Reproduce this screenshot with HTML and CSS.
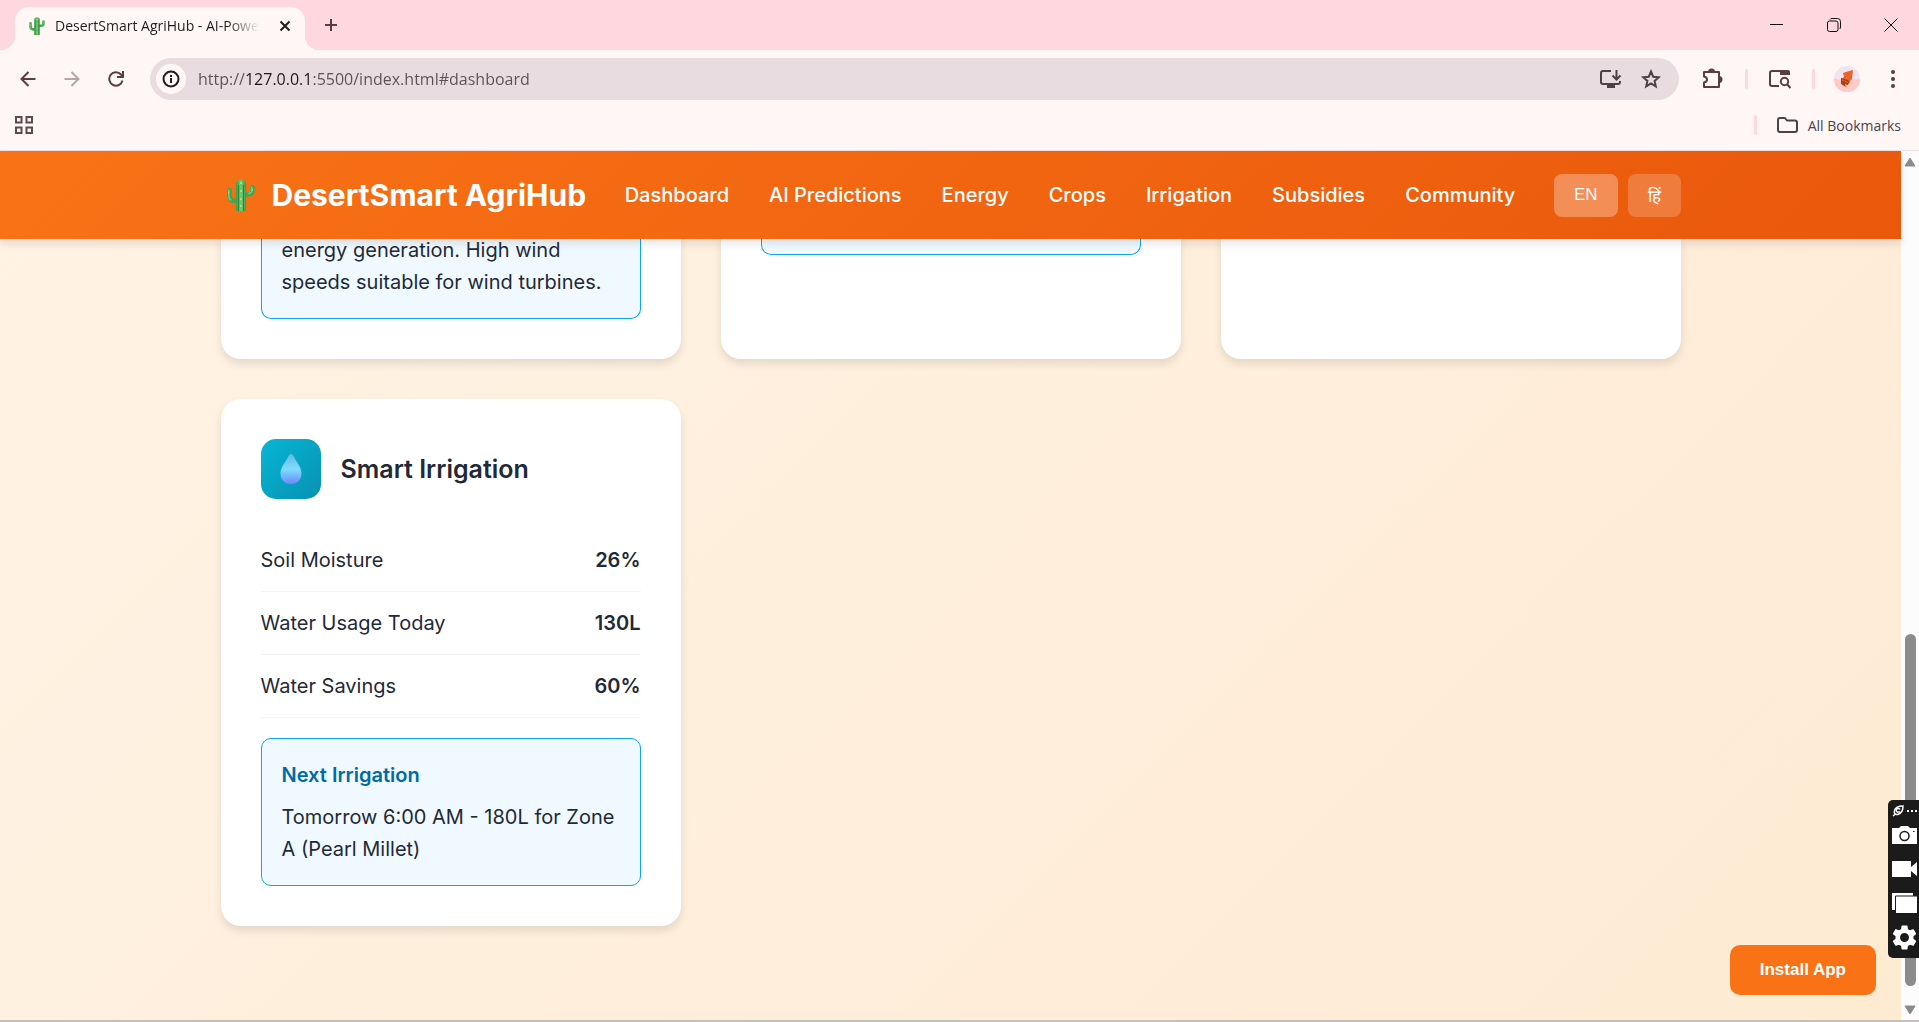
FILE: index.html
```html
<!DOCTYPE html>
<html lang="en">
<head>
    <meta charset="UTF-8">
    <meta name="viewport" content="width=device-width, initial-scale=1.0">
    <title>DesertSmart AgriHub</title>
    <link rel="stylesheet" href="styles.css">
</head>
<body>
    <svg width="0" height="0" class="defs" aria-hidden="true">
        <defs>
            <linearGradient id="cactusGreen" x1="0" x2="1">
                <stop offset="0" stop-color="#3f9a4c"/>
                <stop offset="0.5" stop-color="#6fcf6a"/>
                <stop offset="1" stop-color="#3f9a4c"/>
            </linearGradient>
            <linearGradient id="dropBlue" x1="0" x2="0" y1="0" y2="1">
                <stop offset="0" stop-color="#5fb8e0"/>
                <stop offset="0.5" stop-color="#80dcff"/>
                <stop offset="0.75" stop-color="#72b4fb"/>
                <stop offset="1" stop-color="#7583fb"/>
            </linearGradient>
            <symbol id="cactus" viewBox="0 0 32 32">
                <path d="M4.500 11v6q0 5 5 5h3M27.500 8v3q0 4.500-4.500 4.500h-3.500" fill="none" stroke="#46a453" stroke-width="4.600" stroke-linecap="round"/>
                <path d="M3.800 11v6q0 3 2 4M26.800 8v3q0 3-3 3.500" fill="none" stroke="#77d271" stroke-width="1.400" stroke-linecap="round"/>
                <path d="M11 32V5.500a5 5 0 0 1 10 0V32z" fill="url(#cactusGreen)"/>
                <path d="M13.500 6v26M18.500 6v26" stroke="#34833f" stroke-width="1"/>
                <path d="M16 3v2M16 11v2M16 19v2M16 26v2M3 14h1M27 11h1" stroke="#d5f2b4" stroke-width="1"/>
            </symbol>
        </defs>
    </svg>

    <!-- Tab strip -->
    <div class="tab-strip">
        <div class="tab">
            <svg class="tab-icon" viewBox="0 0 32 32"><use href="#cactus"/></svg>
            <span class="tab-title">DesertSmart AgriHub - AI-Powe</span>
            <button class="icon-btn close-tab" aria-label="Close tab">
                <svg width="12" height="12" viewBox="0 0 12 12"><path d="M1.500 1.500l9 9M10.500 1.500l-9 9" stroke="#241b1d" stroke-width="2"/></svg>
            </button>
        </div>
        <button class="icon-btn new-tab" aria-label="New tab">
            <svg width="14" height="14" viewBox="0 0 14 14"><path d="M7 1v12M1 7h12" stroke="#5a3d42" stroke-width="2"/></svg>
        </button>
        <div class="window-buttons">
            <button aria-label="Minimize"><svg width="14" height="14" viewBox="0 0 14 14"><path d="M0 6.500h13" stroke="#111"/></svg></button>
            <button aria-label="Restore"><svg width="14" height="14" viewBox="0 0 14 14" fill="none" stroke="#111"><rect x="0.500" y="3" width="10.500" height="10.500" rx="2"/><path d="M3 1.500Q3.500.5 5 .5h5.500q3 0 3 3V9q0 1.500-1 2"/></svg></button>
            <button aria-label="Close"><svg width="14" height="14" viewBox="0 0 14 14"><path d="M.5.500l13 13M13.500.500l-13 13" stroke="#111"/></svg></button>
        </div>
    </div>

    <!-- Toolbar -->
    <div class="toolbar">
        <div class="nav-buttons">
            <button class="icon-btn" aria-label="Back"><svg width="16" height="16" viewBox="0 0 16 16" fill="none" stroke="#5a3d42" stroke-width="2"><path d="M15.500 8H2M8.500 1L1.500 8l7 7"/></svg></button>
            <button class="icon-btn" aria-label="Forward"><svg width="16" height="16" viewBox="0 0 16 16" fill="none" stroke="#b5a5a7" stroke-width="2"><path d="M.5 8H14M7.500 1l7 7-7 7"/></svg></button>
            <button class="icon-btn" aria-label="Reload"><svg width="16" height="16" viewBox="0 0 16 16" fill="none" stroke="#5a3d42" stroke-width="2"><path d="M14.500 9.500A6.700 6.700 0 1 1 13 3.500l1.500 1.500M15 0v6H9"/></svg></button>
        </div>
        <div class="address-bar">
            <button class="site-info" aria-label="Site information"><svg width="18" height="18" viewBox="0 0 18 18" fill="none" stroke="#241b1d" stroke-width="2"><circle cx="9" cy="9" r="7.500"/><path d="M9 8v5M9 5v2" /></svg></button>
            <input class="url" type="text" aria-label="Address" value="http://127.0.0.1:5500/index.html#dashboard">
            <button class="icon-btn" aria-label="Install page as app"><svg width="22" height="20" viewBox="0 0 22 20" fill="none" stroke="#4d4145" stroke-width="2"><path d="M11 2H3Q1 2 1 4v9q0 2 2 2h15q2 0 2-2v-1"/><path d="M16.500 1v9M12.500 6.500l4 4 4-4"/><path d="M7 17.500h8" stroke-width="3"/></svg></button>
            <button class="icon-btn" aria-label="Bookmark this tab"><svg width="20" height="20" viewBox="0 0 20 20" fill="none" stroke="#4d4145" stroke-width="2"><path d="M10 2.500l2.200 5.200 5.600.5-4.200 3.700 1.200 5.500-4.800-2.900-4.800 2.900 1.200-5.500-4.200-3.700 5.600-.5z"/></svg></button>
        </div>
        <div class="tools">
            <button class="icon-btn" aria-label="Extensions"><svg width="22" height="22" viewBox="0 0 22 22" fill="none" stroke="#5a3d42" stroke-width="2"><path d="M2 4h15v15H2v-4.500q3-.5 3-3t-3-3z" stroke-linejoin="round"/><path d="M7 4a2.500 2.500 0 0 1 5 0zM17 9a2.500 2.500 0 0 1 0 5z" fill="#5a3d42"/></svg></button>
            <span class="separator"></span>
            <button class="icon-btn" aria-label="Search tabs"><svg width="22" height="20" viewBox="0 0 22 20" fill="none" stroke="#5a3d42" stroke-width="2"><path d="M10 17H3q-2 0-2-2V4q0-2 2-2h8"/><path d="M11 1h8q2 0 2 2v3H11z" fill="#5a3d42" stroke="none"/><circle cx="15.500" cy="12.500" r="3.700"/><path d="M18 15l3.500 4"/></svg></button>
            <span class="separator"></span>
            <button class="icon-btn" aria-label="Profile"><svg width="26" height="26" viewBox="0 0 26 26"><circle cx="13" cy="13" r="13" fill="#f3e3ee"/><path d="M0 12.500q6 2 13 1t13 0A13 13 0 0 1 0 13z" fill="#ffc9c6"/><path d="M9 7l3-1 7-2-1 9-4 4-7-4 3-2z" fill="#e8642a"/><path d="M7 12l7 2 2 2-4 5-5-3z" fill="#a3401f"/><path d="M8 14l7 3" stroke="#e8642a"/><path d="M11 18l4 2-3 2z" fill="#e7c56f"/></svg></button>
            <button class="icon-btn" aria-label="Menu"><svg width="4" height="18" viewBox="0 0 4 18" fill="#5a3d42"><circle cx="2" cy="2" r="2"/><circle cx="2" cy="9" r="2"/><circle cx="2" cy="16" r="2"/></svg></button>
        </div>
    </div>

    <!-- Bookmarks bar -->
    <div class="bookmarks">
        <button class="icon-btn" aria-label="Apps"><svg width="18" height="18" viewBox="0 0 18 18" fill="none" stroke="#5b4b4f" stroke-width="2"><path d="M1 1h5.500v5.500H1zM11.500 1H17v5.500h-5.500zM1 11.500h5.500V17H1zM11.500 11.500H17V17h-5.500z"/></svg></button>
        <span class="separator push"></span>
        <button class="all-bookmarks"><svg width="21" height="16" viewBox="0 0 21 16" fill="none" stroke="#4d4145" stroke-width="2" stroke-linejoin="round"><path d="M1 13V3q0-2 2-2h5l2 2.500h8q2 0 2 2V13q0 2-2 2H3q-2 0-2-2z"/></svg>All Bookmarks</button>
    </div>

    <!-- Web page -->
    <div class="viewport">
        <div class="page">
            <header class="header">
                <div class="header-content">
                    <div class="logo">
                        <svg class="logo-icon" viewBox="0 0 32 32"><use href="#cactus"/></svg>
                        <span>DesertSmart AgriHub</span>
                    </div>
                    <nav class="nav">
                        <a href="#dashboard">Dashboard</a>
                        <a href="#predictions">AI Predictions</a>
                        <a href="#energy">Energy</a>
                        <a href="#crops">Crops</a>
                        <a href="#irrigation">Irrigation</a>
                        <a href="#subsidies">Subsidies</a>
                        <a href="#community">Community</a>
                    </nav>
                    <div class="language">
                        <button class="lang-btn active">EN</button>
                        <button class="lang-btn">हिं</button>
                    </div>
                </div>
            </header>

            <main class="main">
                <div class="dashboard-grid">
                    <section class="card card-scrolled">
                        <div class="recommendation">
                            <p>energy generation. High wind speeds suitable for wind turbines.</p>
                        </div>
                    </section>
                    <section class="card card-scrolled">
                        <div class="recommendation"></div>
                    </section>
                    <section class="card card-scrolled"></section>

                    <section class="card">
                        <div class="card-header">
                            <div class="card-icon">
                                <svg width="22" height="30" viewBox="0 0 22 30"><path d="M11 0c1.500 0 2 1 3 3 2.500 5 7.500 10 7.500 16.500C21.500 26 17 30 11 30S.5 26 .5 19.500C.5 13 5.500 8 8 3c1-2 1.500-3 3-3z" fill="url(#dropBlue)"/></svg>
                            </div>
                            <h3>Smart Irrigation</h3>
                        </div>
                        <div class="metric"><span>Soil Moisture</span><span class="metric-value">26%</span></div>
                        <div class="metric"><span>Water Usage Today</span><span class="metric-value">130L</span></div>
                        <div class="metric"><span>Water Savings</span><span class="metric-value">60%</span></div>
                        <div class="recommendation">
                            <h4>Next Irrigation</h4>
                            <p>Tomorrow 6:00 AM - 180L for Zone A (Pearl Millet)</p>
                        </div>
                    </section>
                </div>
            </main>
            <button class="install-btn">Install App</button>
        </div>

        <div class="scrollbar">
            <svg width="12" height="10" viewBox="0 0 12 10"><path d="M6 1l5 8H1z" fill="#8b8b8b" stroke="#8b8b8b" stroke-linejoin="round"/></svg>
            <div class="thumb"></div>
            <svg width="12" height="10" viewBox="0 0 12 10"><path d="M6 9l5-8H1z" fill="#8b8b8b" stroke="#8b8b8b" stroke-linejoin="round"/></svg>
        </div>

        <!-- Floating recorder -->
        <div class="recorder">
            <div class="recorder-top">
                <svg width="12" height="12" viewBox="0 0 12 12" fill="none" stroke="#fff"><path d="M11 1Q4 1 2.500 5.500C1.500 8 3 10 5.500 9.500 10 8.500 11 5 11 1z" stroke-width="1.500"/><path d="M5 7a2 2 0 1 1 3-2.500M5 7h3M1 11l3-2.500" stroke-width="1.500"/></svg>
                <svg width="10" height="2" viewBox="0 0 10 2" fill="#fff"><path d="M0 0h2v2H0zM4 0h2v2H4zM8 0h2v2H8z"/></svg>
            </div>
            <button aria-label="Take screenshot"><svg width="25" height="18" viewBox="0 0 25 18"><path d="M0 2h7l2-2h7l2 2h7v16H0z" fill="#fff"/><circle cx="12.500" cy="10" r="4.500" fill="none" stroke="#1b1b1b" stroke-width="1.500"/><path d="M21 5.500h1.500" stroke="#1b1b1b"/></svg></button>
            <button aria-label="Record video"><svg width="25" height="16" viewBox="0 0 25 16" fill="#fff"><path d="M0 0h19v16H0zM19 6l6-5v14l-6-5z"/></svg></button>
            <button aria-label="Gallery"><svg width="25" height="20" viewBox="0 0 25 20"><path d="M0 0h21v17H0z" fill="#fff"/><path d="M3.500 3H26v18H3.500z" fill="#fff" stroke="#1b1b1b"/></svg></button>
            <button aria-label="Settings"><svg width="25" height="25" viewBox="2 2 20 20" fill="#fff"><path d="M19.140 12.940c.04-.3.060-.61.060-.94 0-.32-.02-.64-.07-.94l2.030-1.580c.18-.14.230-.41.120-.61l-1.920-3.320c-.12-.22-.37-.29-.59-.22l-2.390.96c-.5-.38-1.030-.7-1.620-.94l-.36-2.540c-.04-.24-.24-.41-.48-.41h-3.840c-.24 0-.43.170-.47.410l-.36 2.540c-.59.240-1.130.57-1.620.94l-2.390-.96c-.22-.08-.47 0-.59.220L2.740 8.870c-.12.210-.08.470.120.610l2.030 1.580c-.05.300-.09.630-.09.940s.02.640.07.940l-2.030 1.580c-.18.140-.23.410-.12.610l1.920 3.320c.12.220.37.290.59.220l2.390-.96c.5.380 1.030.7 1.620.94l.36 2.540c.05.240.24.410.48.410h3.840c.24 0 .44-.17.470-.41l.36-2.540c.59-.24 1.130-.56 1.620-.94l2.390.96c.22.080.47 0 .59-.22l1.920-3.320c.12-.22.070-.47-.12-.61l-2.010-1.580zM12 15.600c-1.980 0-3.600-1.620-3.600-3.600s1.620-3.600 3.600-3.600 3.600 1.620 3.600 3.600-1.620 3.600-3.600 3.600z"/></svg></button>
        </div>
    </div>
</body>
</html>
```
FILE: styles.css
```css
* {
    margin: 0;
    padding: 0;
    box-sizing: border-box;
}
body {
    display: flex;
    flex-direction: column;
    height: 100vh;
    overflow: hidden;
    font-family: Inter, sans-serif;
    font-size: 20px;
    line-height: 32px;
    color: #1f2937;
    background: #fff7f5;
}
button {
    border: none;
    background: none;
    cursor: pointer;
}
svg {
    display: block;
    flex-shrink: 0;
}
.defs {
    position: absolute;
}

/* Browser chrome */
.tab-strip,
.toolbar,
.bookmarks {
    display: flex;
    align-items: center;
    flex-shrink: 0;
    font-family: "Open Sans", sans-serif;
}
.tab-strip {
    height: 50px;
    background: #ffd7df;
}
.tab {
    position: relative;
    align-self: flex-end;
    display: flex;
    align-items: center;
    width: 290px;
    height: 43px;
    margin-left: 15px;
    padding: 0 6px 6px 12px;
    border-radius: 14px 14px 0 0;
    background: #fff7f5;
}
.tab::before,
.tab::after {
    content: "";
    position: absolute;
    bottom: 0;
    width: 14px;
    height: 14px;
}
.tab::before {
    right: 100%;
    background: radial-gradient(circle at 0 0, transparent 14px, #fff7f5 14px);
}
.tab::after {
    left: 100%;
    background: radial-gradient(circle at 100% 0, transparent 14px, #fff7f5 14px);
}
.tab-icon {
    width: 20px;
    height: 18px;
    margin-right: 8px;
}
.tab-title {
    white-space: nowrap;
    font-size: 14px;
    color: #241b1d;
    -webkit-mask-image: linear-gradient(90deg, #000 85%, transparent);
    mask-image: linear-gradient(90deg, #000 85%, transparent);
}
.icon-btn {
    display: flex;
    align-items: center;
    justify-content: center;
    flex-shrink: 0;
    width: 28px;
    height: 28px;
}
.close-tab {
    margin-left: auto;
}
.new-tab {
    margin-left: 12px;
}
.window-buttons {
    display: flex;
    margin-left: auto;
}
.window-buttons button {
    display: flex;
    align-items: center;
    justify-content: center;
    width: 57px;
    height: 48px;
}
.toolbar {
    height: 58px;
    padding: 0 12px 0 14px;
}
.nav-buttons {
    display: flex;
    gap: 16px;
    margin-right: 20px;
}
.address-bar {
    display: flex;
    align-items: center;
    gap: 12px;
    flex: 1;
    height: 42px;
    padding: 0 14px 0 6px;
    border-radius: 21px;
    background: #e9dce1;
}
.site-info {
    display: flex;
    align-items: center;
    justify-content: center;
    width: 30px;
    height: 30px;
    border-radius: 50%;
    background: #fff7f5;
}
/* host part of the address is darker than the rest */
.url {
    flex: 1;
    height: 28px;
    border: none;
    outline: none;
    font-family: "Open Sans", sans-serif;
    font-size: 16px;
    color: transparent;
    background: linear-gradient(90deg, #5d4f55 48px, #1f171a 48px 115px, #5d4f55 115px);
    -webkit-background-clip: text;
    background-clip: text;
}
.tools {
    display: flex;
    align-items: center;
    gap: 18px;
    margin-left: 20px;
}
.separator {
    width: 3px;
    height: 20px;
    border-radius: 2px;
    background: #ffd7df;
}
.bookmarks {
    height: 43px;
    padding: 0 18px 8px 10px;
    border-bottom: 1px solid #efdfe2;
}
.push {
    margin-left: auto;
}
.all-bookmarks {
    display: flex;
    align-items: center;
    gap: 10px;
    margin-left: 20px;
    font-family: "Open Sans", sans-serif;
    font-size: 14px;
    color: #4d4145;
}

/* Page */
.viewport {
    position: relative;
    display: flex;
    flex: 1;
    min-height: 0;
    border-bottom: 2px solid #c4c0c0;
}
.page {
    position: relative;
    display: flex;
    flex-direction: column;
    flex: 1;
    background: linear-gradient(135deg, #fff3e4, #feecd8 75%, #feebd2);
}
.header {
    position: relative;
    z-index: 1;
    padding: 20px;
    background: linear-gradient(135deg, #f97316, #ea580c);
    box-shadow: 0 5px 8px rgba(0, 0, 0, 0.1);
}
.header-content {
    display: flex;
    align-items: center;
    justify-content: space-between;
    max-width: 1460px;
    height: 48px;
    margin: 0 auto;
}
.logo {
    display: flex;
    align-items: center;
    gap: 11px;
    font-size: 30px;
    font-weight: 700;
    color: white;
}
.logo-icon {
    width: 40px;
    height: 32px;
}
.nav {
    display: flex;
    gap: 40px;
}
.nav a {
    font-weight: 500;
    color: white;
    text-decoration: none;
}
.language {
    display: flex;
    gap: 10px;
}
.lang-btn {
    height: 43px;
    padding: 0 20px;
    border-radius: 8px;
    font-family: "Liberation Sans", Arial, sans-serif;
    font-size: 17px;
    color: white;
    background: rgba(255, 255, 255, 0.2);
}
.lang-btn.active {
    background: rgba(255, 255, 255, 0.3);
}

/* the grid is scrolled to its end, earlier content is cut at the top */
.main {
    display: flex;
    flex-direction: column;
    justify-content: flex-end;
    flex: 1;
    min-height: 0;
    overflow: hidden;
    padding: 0 20px 94px;
}
.dashboard-grid {
    display: grid;
    grid-template-columns: repeat(3, 1fr);
    gap: 40px;
    width: 100%;
    max-width: 1460px;
    margin: 0 auto;
}
.card {
    padding: 40px;
    border-radius: 20px;
    background: white;
    box-shadow: 0 5px 8px rgba(0, 0, 0, 0.1);
}
.card-header {
    display: flex;
    align-items: center;
    gap: 20px;
    margin-bottom: 30px;
}
.card-header h3 {
    font-size: 25px;
    font-weight: 600;
}
.card-icon {
    display: flex;
    align-items: center;
    justify-content: center;
    width: 60px;
    height: 60px;
    border-radius: 15px;
    background: linear-gradient(135deg, #06b6d4, #0891b2);
}
.metric {
    display: flex;
    justify-content: space-between;
    padding: 15px 0;
    border-bottom: 1px solid #f3f4f6;
}
.metric-value {
    font-weight: 600;
}
.recommendation {
    margin-top: 20px;
    padding: 20px;
    border: 1px solid #0ea5e9;
    border-radius: 10px;
    background: #f0f9ff;
}
.recommendation h4 {
    margin-bottom: 10px;
    font-size: 20px;
    font-weight: 600;
    color: #0369a1;
}
.card-scrolled {
    padding-top: 0;
    border-radius: 0 0 20px 20px;
}
.card-scrolled .recommendation {
    margin-top: 0;
    padding-top: 0;
    border-top: none;
    border-radius: 0 0 10px 10px;
}
.install-btn {
    position: absolute;
    right: 25px;
    bottom: 25px;
    padding: 15px 30px;
    border-radius: 10px;
    font-family: "Liberation Sans", Arial, sans-serif;
    font-size: 17px;
    font-weight: 700;
    line-height: 20px;
    color: white;
    background: #f97316;
}

.scrollbar {
    display: flex;
    flex-direction: column;
    align-items: center;
    width: 18px;
    padding: 6px 0 5px;
    background: #fcfcfc;
}
.thumb {
    width: 11px;
    height: 41%;
    margin: auto 0 19px;
    border-radius: 6px;
    background: #8b8b8b;
}
.recorder {
    position: absolute;
    right: 0;
    bottom: 62px;
    display: flex;
    flex-direction: column;
    align-items: center;
    padding: 4px 2px 4px 4px;
    border-radius: 5px 0 0 5px;
    background: #1b1b1b;
}
.recorder-top {
    display: flex;
    align-items: center;
    gap: 3px;
    height: 14px;
}
.recorder button {
    display: flex;
    align-items: center;
    height: 34px;
}
```
